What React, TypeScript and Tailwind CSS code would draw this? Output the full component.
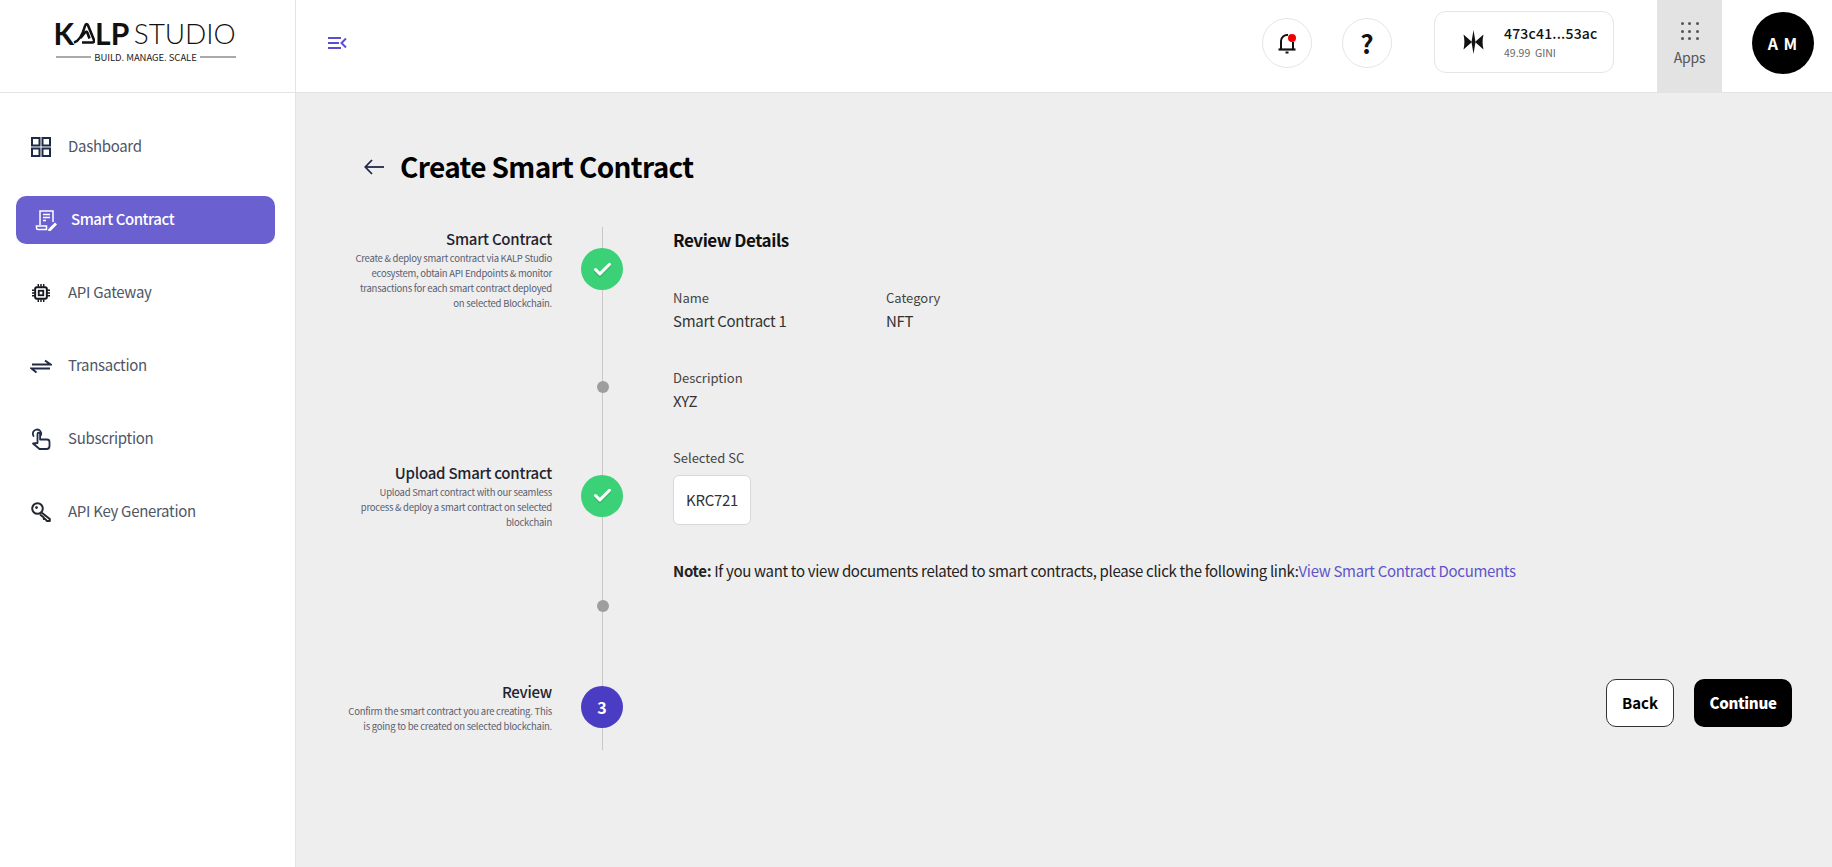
import { Check } from 'lucide-react';

const font = "font-['Noto_Sans_CJK_JP','Noto_Sans',sans-serif]";

const navItems = [
  { label: 'Dashboard', icon: <DashboardIcon /> },
  { label: 'Smart Contract', icon: <ContractIcon />, active: true },
  { label: 'API Gateway', icon: <ChipIcon /> },
  { label: 'Transaction', icon: <SwapIcon /> },
  { label: 'Subscription', icon: <TapIcon /> },
  { label: 'API Key Generation', icon: <KeyIcon /> },
];

function DashboardIcon() {
  return (
    <svg width="22" height="22" viewBox="0 0 22 22" fill="none" stroke="#1f2a44" strokeWidth="2">
      <rect x="2" y="2" width="7.5" height="7.5" />
      <rect x="12.5" y="2" width="7.5" height="7.5" />
      <rect x="2" y="12.5" width="7.5" height="7.5" />
      <rect x="12.5" y="12.5" width="7.5" height="7.5" />
    </svg>
  );
}

function ContractIcon() {
  return (
    <svg width="22" height="22" viewBox="0 0 22 22" fill="none" stroke="#fff" strokeWidth="1.5">
      <path d="M5 16V2h13v11" />
      <path d="M8 5.5h7M8 8.5h7M8 11.5h3" strokeWidth="1.6" />
      <path d="M1.5 17h10v3.5H3a1.5 1.5 0 0 1-1.5-1.500z" />
      <path d="M14 20.5l6-6 1 1-6 6h-1z" fill="#fff" />
    </svg>
  );
}

function ChipIcon() {
  return (
    <svg width="18" height="18" viewBox="0 0 20 20" fill="none" stroke="#15181f">
      <rect x="3.5" y="3.500" width="13" height="13" rx="2" strokeWidth="2.2" />
      <rect x="7.5" y="7.500" width="5" height="5" strokeWidth="2" />
      <path d="M7 0v3M10 0v3M13 0v3M7 17v3M10 17v3M13 17v3M0 7h3M0 10h3M0 13h3M17 7h3M17 10h3M17 13h3" strokeWidth="1.6" />
    </svg>
  );
}

function SwapIcon() {
  return (
    <svg width="22" height="16" viewBox="0 0 22 16" fill="none" stroke="#1f2a44" strokeWidth="2">
      <path d="M2 6.500h18.500L15 2.500" />
      <path d="M20 10.500H1.500l5 4" />
    </svg>
  );
}

function TapIcon() {
  return (
    <svg width="20" height="22" viewBox="0 0 20 22" fill="none" stroke="#1f2a44" strokeWidth="1.8" strokeLinecap="round" strokeLinejoin="round">
      <path d="M2.500 8a4.200 4.200 0 1 1 7.500-1" />
      <path d="M6.500 15V6a1.300 1.300 0 0 1 2.600 0v5.500H16a2.500 2.500 0 0 1 2.500 2.500v4a3 3 0 0 1-3 3H8.500L2 15.500l4.500-.5" />
    </svg>
  );
}

function KeyIcon() {
  return (
    <svg width="20" height="20" viewBox="0 0 20 20" fill="none" stroke="#24272e" strokeWidth="2" strokeLinejoin="round">
      <circle cx="6.500" cy="6.500" r="5.300" />
      <circle cx="5.500" cy="5.500" r="1" fill="#24272e" strokeWidth="1" />
      <path d="M10.500 10.500l8.300 6.500v2h-3l-1.500-2h-1.500v-1.500l-3.800-3" />
    </svg>
  );
}

function MenuIcon() {
  return (
    <svg width="19" height="14" viewBox="0 0 19 14" fill="none" stroke="#5b4fd0" strokeWidth="2">
      <path d="M0 2h13M0 7h11M0 12h13" />
      <path d="M18 2.500L13.500 7l4.500 4.500" />
    </svg>
  );
}

function BackArrow() {
  return (
    <svg width="20" height="16" viewBox="0 0 20 16" fill="none" stroke="#1f2a44" strokeWidth="1.8">
      <path d="M20 8H1.500" />
      <path d="M8 1L1.300 8 8 15" />
    </svg>
  );
}

function Logo() {
  return (
    <div className="flex w-[180px] flex-col">
      <div className="flex h-[26px] items-center font-['Lato',sans-serif] text-[30px] leading-[26px] text-[#111]">
        <span className="-ml-[2px] font-bold">K</span>
        <svg width="22" height="22" viewBox="0 0 22 22" fill="none" stroke="#111" strokeWidth="2.600" className="ml-[-1px]">
          <path d="M1 20.500C6 19 9.500 13 12 4c.7-2.500 2.500-2.500 3.300 0L21 18c.5 1.700-.3 2.500-1.800 2.500H9" />
          <path d="M7.500 16L12 10.500c1-1 2-.8 2.500.5l2 5.500" />
        </svg>
        <span className="font-bold">LP</span>
        <span className="ml-auto text-[28px] font-light tracking-[-0.1px]">STUDIO</span>
      </div>
      <div className="mt-[5px] flex items-center gap-[3px]">
        <div className="h-[2px] flex-1 bg-[#aaa]" />
        <span className={`${font} text-[9.5px] leading-[12px] tracking-[-0.05px] text-[#222]`}>BUILD. MANAGE. SCALE</span>
        <div className="h-[2px] flex-1 bg-[#aaa]" />
      </div>
    </div>
  );
}

function KalpMark() {
  return (
    <svg width="21" height="24" viewBox="0 0 21 24" fill="#111">
      <path d="M0.500 4.500L9 12l-8.500 7.500c1.200-4.800 1.200-10.200 0-15z" />
      <path d="M20.500 4.500L12 12l8.500 7.500c-1.200-4.800-1.200-10.200 0-15z" />
      <path d="M10.500 0l2 12-2 12-2-12z" />
    </svg>
  );
}

function Step({ title, lines, circle }: { title: string; lines: string[]; circle: React.ReactNode }) {
  return (
    <div className="flex items-center">
      <div className="w-[216px] text-right">
        <div className="text-[15px] leading-[24px] font-medium tracking-[-0.25px] text-[#1f2430]">{title}</div>
        {lines.map((l) => (
          <div key={l} className="text-[9.5px] leading-[15px] tracking-[-0.25px] whitespace-nowrap text-[#5a6070]">{l}</div>
        ))}
      </div>
      <div className="ml-[29px]">{circle}</div>
    </div>
  );
}

function Done() {
  return (
    <div className="flex h-[42px] w-[42px] items-center justify-center rounded-full bg-[#3bd177]">
      <Check size={21} strokeWidth={3.5} color="#fff" className="drop-shadow-[0_2px_0_rgba(0,0,0,0.1)]" />
    </div>
  );
}

function Dot({ className }: { className: string }) {
  return <div className={`ml-[261px] h-[12px] w-[12px] rounded-full bg-[#9e9e9e] ${className}`} />;
}

export default function App() {
  return (
    <div className={`${font} flex h-[867px] w-[1832px] flex-col overflow-hidden bg-[#eeeeee]`}>
      <header className="flex h-[93px] shrink-0 border-b border-[#e3e3e3] bg-white">
        <div className="flex w-[296px] shrink-0 items-center justify-center border-r border-[#e3e3e3] pr-[4px] pb-[10px]">
          <Logo />
        </div>
        <div className="flex flex-1 items-center pl-[32px]">
          <div className="pb-[6px]">
            <MenuIcon />
          </div>
          <div className="ml-auto flex h-full items-start">
            <div className="relative mt-[18px] flex h-[50px] w-[50px] items-center justify-center rounded-full border border-[#e5e5e5]">
              <svg width="18" height="22" viewBox="0 0 18 22" fill="none" stroke="#111" strokeWidth="2">
                <path d="M3 17V9a6 6 0 0 1 7-5.900" />
                <path d="M15 10v7" />
                <path d="M0.500 17.500h17" strokeWidth="2.200" />
                <path d="M7.500 20.500h3" />
              </svg>
              <span className="absolute top-[15px] left-[25px] h-[8px] w-[8px] rounded-full bg-[#f00000]" />
            </div>
            <div className="mt-[18px] ml-[30px] flex h-[50px] w-[50px] items-center justify-center rounded-full border border-[#e5e5e5] text-[26px] leading-none font-bold text-[#111]">
              ?
            </div>
            <div className="mt-[11px] ml-[42px] flex h-[62px] w-[180px] items-center rounded-[12px] border border-[#e5e5e5] pl-[28px]">
              <KalpMark />
              <div className="ml-[20px]">
                <div className="text-[14px] leading-[20px] font-medium tracking-[0.2px] text-[#111]">473c41...53ac</div>
                <div className="mt-[2px] text-[10.5px] leading-[16px] text-[#666]">49.99 &nbsp;GINI</div>
              </div>
            </div>
            <div className="ml-[43px] flex h-full w-[65px] flex-col items-center bg-[#e3e3e3] pt-[22px]">
              <div className="grid grid-cols-3 gap-x-[4.5px] gap-y-[4.5px]">
                {Array.from({ length: 9 }).map((_, i) => (
                  <span key={i} className="h-[3px] w-[3px] rounded-full bg-[#555]" />
                ))}
              </div>
              <span className="mt-[7px] text-[14px] leading-[20px] tracking-[-0.2px] text-[#555]">Apps</span>
            </div>
            <div className="mt-[12px] mr-[18px] ml-[30px] flex h-[62px] w-[62px] items-center justify-center rounded-full bg-black text-[16px] font-bold tracking-[1px] text-white">
              A M
            </div>
          </div>
        </div>
      </header>

      <div className="flex flex-1">
        <aside className="flex w-[296px] shrink-0 flex-col border-r border-[#e3e3e3] bg-white px-[16px] pt-[30px]">
          {navItems.map((item) => (
            <div
              key={item.label}
              className={`mb-[25px] flex h-[48px] w-[259px] items-center rounded-[10px] ${
                item.active ? 'bg-[#6a60d0] pl-[19px] font-medium text-white' : 'pl-[14px] text-[#4f5666]'
              }`}
            >
              <span className="flex w-[22px] justify-center">{item.icon}</span>
              <span className={`pb-[2px] text-[15px] leading-[20px] ${item.active ? 'ml-[14px] tracking-[-0.45px]' : 'ml-[16px] tracking-[-0.3px]'}`}>{item.label}</span>
            </div>
          ))}
        </aside>

        <main className="flex-1 pt-[50px] pl-[40px]">
          <div className="flex h-[48px] items-center pl-[28px]">
            <BackArrow />
            <h1 className="ml-[16px] pb-[2px] text-[28px] leading-[46px] font-bold tracking-[-0.65px] text-black">Create Smart Contract</h1>
          </div>

          <div className="mt-[36px] flex h-[523px] pr-[40px]">
            <div className="relative w-[287px] shrink-0">
              <div className="absolute top-0 bottom-0 left-[266px] w-[1px] bg-[#c8c8c8]" />
              <div className="relative flex flex-col">
                <Step
                  title="Smart Contract"
                  lines={[
                    'Create & deploy smart contract via KALP Studio',
                    'ecosystem, obtain API Endpoints & monitor',
                    'transactions for each smart contract deployed',
                    'on selected Blockchain.',
                  ]}
                  circle={<Done />}
                />
                <Dot className="mt-[70px]" />
                <div className="mt-[68px]">
                  <Step
                    title="Upload Smart contract"
                    lines={[
                      'Upload Smart contract with our seamless',
                      'process & deploy a smart contract on selected',
                      'blockchain',
                    ]}
                    circle={<Done />}
                  />
                </div>
                <Dot className="mt-[70px]" />
                <div className="mt-[68px]">
                  <Step
                    title="Review"
                    lines={['Confirm the smart contract you are creating. This', 'is going to be created on selected blockchain.']}
                    circle={
                      <div className="flex h-[42px] w-[42px] items-center justify-center rounded-full bg-[#4b3cc4] text-[16px] font-bold text-white">
                        3
                      </div>
                    }
                  />
                </div>
              </div>
            </div>

            <div className="ml-[50px] flex flex-1 flex-col text-[#333]">
              <div className="text-[17px] leading-[26px] font-bold tracking-[-0.45px] text-[#111]">Review Details</div>
              <div className="mt-[35px] flex">
                <div className="w-[213px]">
                  <div className="text-[13px] leading-[20px] text-[#444]">Name</div>
                  <div className="mt-[2px] text-[15px] leading-[22px] tracking-[-0.3px]">Smart Contract 1</div>
                </div>
                <div>
                  <div className="text-[13px] leading-[20px] text-[#444]">Category</div>
                  <div className="mt-[2px] text-[15px] leading-[22px] tracking-[-0.3px]">NFT</div>
                </div>
              </div>
              <div className="mt-[36px] text-[13px] leading-[20px] text-[#444]">Description</div>
              <div className="mt-[2px] text-[15px] leading-[22px] tracking-[-0.3px]">XYZ</div>
              <div className="mt-[36px] text-[13px] leading-[20px] text-[#444]">Selected SC</div>
              <div className="mt-[7px] flex h-[50px] w-[78px] items-center justify-center rounded-[6px] border border-[#d8d8d8] bg-white text-[15px] tracking-[-0.3px]">
                KRC721
              </div>
              <p className="mt-[34px] text-[15px] leading-[24px] tracking-[-0.32px] text-[#222]">
                <b className="font-bold">Note:</b> If you want to view documents related to smart contracts, please click the following link:
                <span className="text-[#5f55c8]">View Smart Contract Documents</span>
              </p>
              <div className="mt-auto mb-[23px] flex justify-end gap-[20px]">
                <button className="h-[48px] w-[68px] rounded-[10px] border border-[#333] bg-white text-[15px] font-bold text-black">Back</button>
                <button className="h-[48px] w-[98px] rounded-[10px] bg-black text-[15px] font-extrabold tracking-[-0.3px] text-white">Continue</button>
              </div>
            </div>
          </div>
        </main>
      </div>
    </div>
  );
}
